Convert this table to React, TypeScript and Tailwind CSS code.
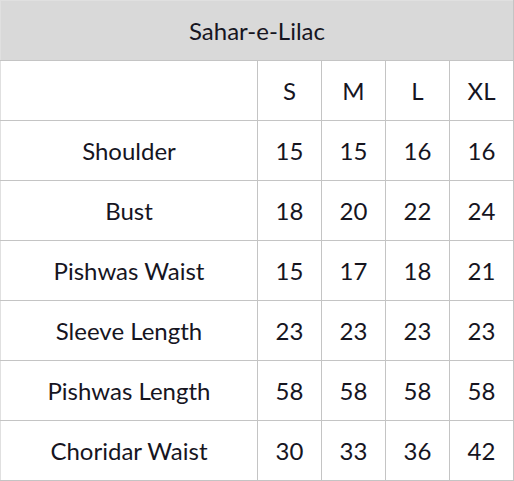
import React from 'react';

const sizes = ['S', 'M', 'L', 'XL'];

const rows: { label: string; values: number[] }[] = [
    { label: 'Shoulder', values: [15, 15, 16, 16] },
    { label: 'Bust', values: [18, 20, 22, 24] },
    { label: 'Pishwas Waist', values: [15, 17, 18, 21] },
    { label: 'Sleeve Length', values: [23, 23, 23, 23] },
    { label: 'Pishwas Length', values: [58, 58, 58, 58] },
    { label: 'Choridar Waist', values: [30, 33, 36, 42] },
];

export default function App() {
    return (
        <div className="bg-white" style={{ fontFamily: 'Lato, "Open Sans", sans-serif' }}>
            <table className="w-[513px] border-collapse table-fixed text-[24px] leading-none text-[#16151f]">
                <colgroup>
                    <col className="w-[257px]" />
                    <col className="w-[64px]" />
                    <col className="w-[64px]" />
                    <col className="w-[64px]" />
                    <col className="w-[64px]" />
                </colgroup>
                <thead>
                    <tr className="h-[60px] bg-[#d9d9d9]">
                        <th colSpan={5} className="border border-[#c4c4c4] border-t-[#e0e0e0] border-l-[#e0e0e0] font-normal text-center">
                            Sahar-e-Lilac
                        </th>
                    </tr>
                </thead>
                <tbody>
                    <tr className="h-[60px]">
                        <td className="border border-[#c4c4c4] border-l-[#e0e0e0]" />
                        {sizes.map((s) => (
                            <td key={s} className="border border-[#c4c4c4] text-center">
                                {s}
                            </td>
                        ))}
                    </tr>
                    {rows.map((r) => (
                        <tr key={r.label} className="h-[60px]">
                            <td className="border border-[#c4c4c4] border-l-[#e0e0e0] text-center">{r.label}</td>
                            {r.values.map((v, i) => (
                                <td key={i} className="border border-[#c4c4c4] text-center">
                                    {v}
                                </td>
                            ))}
                        </tr>
                    ))}
                </tbody>
            </table>
        </div>
    );
}
